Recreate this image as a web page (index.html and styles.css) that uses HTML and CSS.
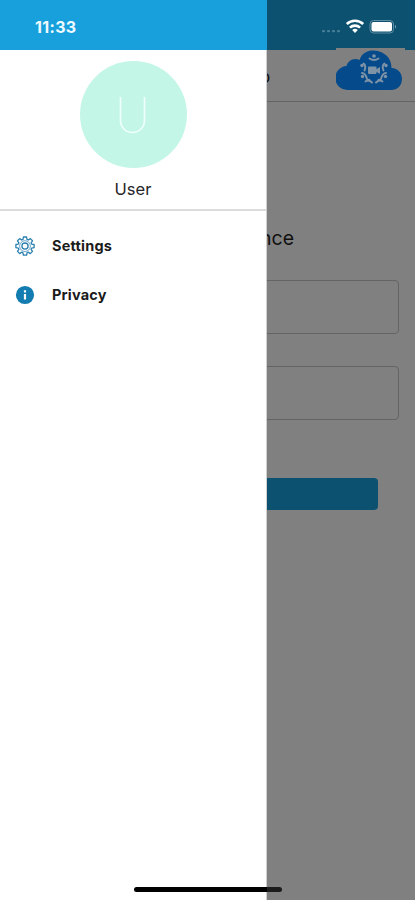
FILE: index.html
```html
<!DOCTYPE html>
<html lang="en">
<head>
<meta charset="utf-8">
<meta name="viewport" content="width=device-width, initial-scale=1">
<title>Menu</title>
<link rel="stylesheet" href="styles.css">
</head>
<body>
<div class="screen">
  <nav class="drawer">
    <div class="status"><span class="time">11:33</span></div>
    <div class="profile">
      <div class="avatar"><svg width="28" height="38" viewBox="0 0 28 38"><path d="M1.500 1v23.500a12 12 0 0 0 24 0V1" fill="none" stroke="#effffb" stroke-width="1.700"/></svg></div>
      <div class="name">User</div>
    </div>
    <a class="item">
      <svg class="icon" width="20" height="20" viewBox="0 0 20 20" fill="none" stroke="#2b80b0" stroke-width="1.300" stroke-linejoin="round">
        <path d="M8.400 1h3.200l.4 2.400 1.300.6 2-1.400 2.200 2.200-1.400 2 .6 1.300 2.400.4v3.200l-2.400.4-.6 1.300 1.400 2-2.200 2.200-2-1.400-1.300.6-.4 2.400H8.400L8 16.800l-1.300-.6-2 1.400-2.200-2.200 1.400-2-.6-1.300L.9 11.700V8.500l2.400-.4.6-1.300-1.400-2 2.200-2.200 2 1.400 1.300-.6z"/>
        <circle cx="10" cy="10.100" r="5.400" stroke-width=".7"/>
        <circle cx="10" cy="10.100" r="3.100"/>
      </svg>
      <span>Settings</span>
    </a>
    <a class="item">
      <svg class="icon" width="20" height="20" viewBox="0 0 20 20"><circle cx="10" cy="10" r="9.100" fill="#137cb0"/><path d="M8.900 5.200h2.200v2.200H8.900zM8.900 9h2.200v5.600H8.900z" fill="#fff"/></svg>
      <span>Privacy</span>
    </a>
  </nav>
  <main class="page">
    <div class="status status-dim">
      <svg width="76" height="20" viewBox="0 0 76 20">
        <g fill="#477f98"><rect x="1" y="13" width="3" height="2.300" rx="1"/><rect x="6" y="13" width="3" height="2.300" rx="1"/><rect x="11" y="13" width="3" height="2.300" rx="1"/><rect x="16" y="13" width="3" height="2.300" rx="1"/></g>
        <g fill="none" stroke="#fff" stroke-width="2.600"><path d="M25.800 7a12 12 0 0 1 16.400 0M28.900 10.600a7.500 7.500 0 0 1 10.200 0"/></g>
        <path d="M31.200 12.900a4.200 4.200 0 0 1 5.600 0L34 15.900z" fill="#fff"/>
        <rect x="49" y="3.500" width="23.500" height="12.500" rx="3.500" fill="none" stroke="#5c8ea4"/>
        <rect x="50.500" y="5" width="20.500" height="9.500" rx="2" fill="#fff"/>
        <path d="M74 7.800q2 2 0 4z" fill="#84aaba"/>
      </svg>
    </div>
    <header class="topbar">
      <span class="heading">o</span>
      <div class="logo">
        <svg width="69" height="43" viewBox="0 0 69 43">
          <path d="M12 42a12 12 0 0 1-1.500-24C12 12.500 18 9.500 23.500 12 27 1 39 1 46 4.500c7 3.500 9.500 9.500 9.500 15.500C62 20.500 66 25 66 31c0 6.500-4.500 11-11 11z" fill="#054b8c"/>
          <g fill="none" stroke="#7f93a6" stroke-width="1.900" stroke-linecap="round">
            <path d="M33.500 10.500q4.500 3 9 0M27.500 15.500q3 2.500 1 7M48.500 15.500q-3 2.500-1 7M26 25q3.500 0 5 6M50 25q-3.500 0-5 6M29.500 33.500q3-2.500 6.500 1M46.500 33.500q-3-2.500-6.500 1"/>
          </g>
          <g fill="#7f93a6"><circle cx="38" cy="8" r="1.800"/><circle cx="26" cy="17.500" r="1.700"/><circle cx="50" cy="17.500" r="1.700"/><circle cx="26.500" cy="28.500" r="1.700"/><circle cx="49.500" cy="28.500" r="1.700"/><circle cx="33" cy="32" r="1.300"/><circle cx="43" cy="32" r="1.300"/><rect x="32" y="18.500" width="8.500" height="7.500" rx="1"/><path d="M40 21.500l4-2.500v7L40 23.500z"/></g>
        </svg>
      </div>
    </header>
    <div class="caption"><span>nce</span></div>
    <div class="field"></div>
    <div class="field"></div>
    <div class="button"></div>
  </main>
  <div class="home"></div>
</div>
</body>
</html>
```
FILE: styles.css
```css
* { box-sizing: border-box; }
body { margin: 0; font-family: Inter, "Liberation Sans", sans-serif; }
svg { display: block; }
.screen {
  position: relative;
  display: grid;
  grid-template-columns: 267px 148px;
  height: 900px;
  overflow: hidden;
}
.drawer { background: #fff; border-right: 1px solid #d0d0d0; }
.status {
  display: flex;
  align-items: center;
  height: 50px;
  margin-right: -1px;
  padding: 4px 0 0 35px;
  background: #18a0dc;
}
.time { color: #edfaff; font-size: 16px; font-weight: 700; letter-spacing: 0.35px; }
.profile {
  display: flex;
  flex-direction: column;
  align-items: center;
  height: 161px;
  padding-top: 11px;
  border-bottom: 2px solid #dcdcdc;
}
.avatar {
  display: flex;
  align-items: center;
  justify-content: center;
  width: 107px;
  height: 107px;
  border-radius: 50%;
  background: #c3f6e7;
}
.name { margin-top: 11px; color: #262626; font-size: 16.5px; line-height: 20px; }
.item {
  display: flex;
  align-items: center;
  gap: 17px;
  height: 49px;
  padding-left: 15px;
  color: #1b1b1b;
  font-size: 14.5px;
  font-weight: 700;
  letter-spacing: 0.2px;
}
.profile + .item { margin-top: 10px; }
.page { overflow: hidden; background: #808080; }
.status-dim { justify-content: flex-end; margin: 0; padding: 4px 18px 0 0; background: #0c516f; }
.topbar {
  display: flex;
  justify-content: space-between;
  height: 52px;
  border-bottom: 1px solid #646464;
}
.heading { margin: 16px 0 0 -7px; color: #101010; font-size: 17px; line-height: 22px; }
.logo { width: 69px; height: 43px; margin: -2px 10px 0 0; background: #808080; }
.caption {
  display: flex;
  justify-content: flex-end;
  height: 178px;
  padding: 123px 121px 0 0;
  color: #101010;
  font-size: 19.5px;
  line-height: 26px;
}
.field {
  height: 54px;
  margin: 0 16px 32px -20px;
  border: 1px solid #646464;
  border-radius: 4px;
}
.button {
  height: 32px;
  margin: 58px 37px 0 -20px;
  border-radius: 4px;
  background: #0c516f;
}
.home {
  position: absolute;
  left: 134px;
  bottom: 8px;
  width: 148px;
  height: 5px;
  border-radius: 3px;
  background: linear-gradient(90deg, #000 133px, #1c1c1c 133px);
}
```
